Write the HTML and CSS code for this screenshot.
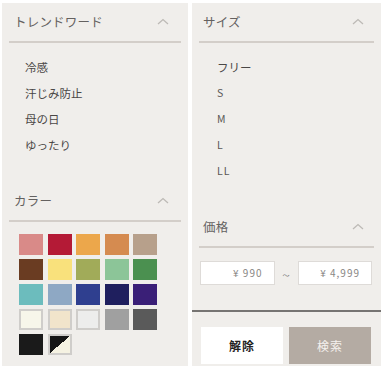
FILE: index.html
```html
<!DOCTYPE html>
<html lang="ja">
<head>
<meta charset="utf-8">
<link rel="stylesheet" href="styles.css">
</head>
<body>
<div class="page">
  <div class="panel">
    <section class="sec">
      <div class="head"><span>トレンドワード</span><svg class="chev" width="12" height="7" viewBox="0 0 12 7"><path d="M1 6 L6 1.5 L11 6" fill="none" stroke="#bdbab6" stroke-width="1.3"/></svg></div>
      <ul class="list">
        <li>冷感</li>
        <li>汗じみ防止</li>
        <li>母の日</li>
        <li>ゆったり</li>
      </ul>
    </section>
    <section class="sec">
      <div class="head"><span>カラー</span><svg class="chev" width="12" height="7" viewBox="0 0 12 7"><path d="M1 6 L6 1.5 L11 6" fill="none" stroke="#bdbab6" stroke-width="1.3"/></svg></div>
      <div class="swatches">
        <span class="sw c1"></span><span class="sw c2"></span><span class="sw c3"></span><span class="sw c4"></span><span class="sw c5"></span>
        <span class="sw c6"></span><span class="sw c7"></span><span class="sw c8"></span><span class="sw c9"></span><span class="sw c10"></span>
        <span class="sw c11"></span><span class="sw c12"></span><span class="sw c13"></span><span class="sw c14"></span><span class="sw c15"></span>
        <span class="sw c16 light"></span><span class="sw c17 light"></span><span class="sw c18 light"></span><span class="sw c19"></span><span class="sw c20"></span>
        <span class="sw c21"></span><span class="sw c22 light"></span>
      </div>
    </section>
  </div>
  <div class="panel">
    <section class="sec">
      <div class="head"><span>サイズ</span><svg class="chev" width="12" height="7" viewBox="0 0 12 7"><path d="M1 6 L6 1.5 L11 6" fill="none" stroke="#bdbab6" stroke-width="1.3"/></svg></div>
      <ul class="list">
        <li>フリー</li>
        <li class="lat">S</li>
        <li class="lat">M</li>
        <li class="lat">L</li>
        <li class="lat">LL</li>
      </ul>
    </section>
    <section class="sec">
      <div class="head"><span>価格</span><svg class="chev" width="12" height="7" viewBox="0 0 12 7"><path d="M1 6 L6 1.5 L11 6" fill="none" stroke="#bdbab6" stroke-width="1.3"/></svg></div>
      <div class="price">
        <div class="inp">¥ 990</div>
        <span class="tilde">～</span>
        <div class="inp">¥ 4,999</div>
      </div>
    </section>
    <div class="foot">
      <button class="btn clear">解除</button>
      <button class="btn search">検索</button>
    </div>
  </div>
</div>
</body>
</html>
```

FILE: styles.css
```css
* { box-sizing: border-box; }
html, body { margin: 0; padding: 0; background: #ffffff; }
body {
  font-family: "Noto Sans CJK JP", "Noto Sans", sans-serif;
  width: 385px;
  height: 368px;
  overflow: hidden;
}
.page {
  display: flex;
  gap: 4px;
  padding: 3px 4px 2px 2px;
  height: 368px;
}
.panel {
  background: #f0eeeb;
  display: flex;
  flex-direction: column;
}
.panel:first-child { width: 186px; }
.panel:last-child { width: 189px; }
.head {
  height: 40px;
  margin: 0 7px;
  padding: 0 12px 1px 5px;
  border-bottom: 2px solid #d3cec9;
  display: flex;
  align-items: center;
  justify-content: space-between;
  font-size: 12.5px;
  color: #646160;
  letter-spacing: 0.2px;
}
.panel:last-child .head { padding-left: 4px; padding-right: 10px; }
.chev { display: block; }
.list {
  list-style: none;
  margin: 0;
  padding: 11px 0 24px 23px;
}
.panel:last-child .list { padding-left: 25px; }
.list li {
  height: 26px;
  line-height: 26px;
  font-size: 11.5px;
  color: #4a4746;
}
.list li.lat { font-size: 10.5px; color: #5a5755; letter-spacing: 1px; }
.swatches {
  display: grid;
  grid-template-columns: repeat(5, 24px);
  grid-auto-rows: 21px;
  column-gap: 4.5px;
  row-gap: 4px;
  padding: 12px 0 0 17px;
}
.sw { display: block; }
.sw.light { border: 2px solid #cfcdca; }
.c1 { background: #d98a88; }
.c2 { background: #b41a36; }
.c3 { background: #eca74b; }
.c4 { background: #d58b50; }
.c5 { background: #b7a08b; }
.c6 { background: #6a3c22; }
.c7 { background: #f9e17c; }
.c8 { background: #a1ab59; }
.c9 { background: #8cc598; }
.c10 { background: #4b9050; }
.c11 { background: #6cbcbd; }
.c12 { background: #8ea8c4; }
.c13 { background: #2f3f8f; }
.c14 { background: #1f1f5e; }
.c15 { background: #3a1f77; }
.c16 { background: #f7f6ea; }
.c17 { background: #f1e4cb; }
.c18 { background: #ededec; }
.c19 { background: #a0a0a0; }
.c20 { background: #5a5a5a; }
.c21 { background: #1a1a1a; }
.c22 { background: linear-gradient(to bottom right, #151515 50%, #f5f2e2 50%); }
.price {
  display: flex;
  align-items: center;
  padding: 13px 9px 0 8px;
}
.inp {
  flex: 1;
  height: 24px;
  background: #ffffff;
  border: 1px solid #dedbd8;
  font-size: 10px;
  color: #8a8785;
  text-align: right;
  line-height: 22px;
  padding-right: 11px;
  letter-spacing: 1px;
}
.tilde {
  width: 23px;
  text-align: center;
  font-size: 7px;
  color: #777;
  padding-top: 3px;
}
.foot {
  margin-top: 25px;
  border-top: 2px solid #767472;
  padding: 15px 10px 0 9px;
  display: flex;
  gap: 6px;
}
.btn {
  flex: 1;
  height: 37px;
  border: none;
  font-family: "Noto Sans CJK JP", sans-serif;
  font-size: 12px;
  font-weight: 700;
  letter-spacing: 1px;
}
.clear { background: #ffffff; color: #222; }
.search { background: #b4aba3; color: #f4f1ee; font-weight: 400; }
```
